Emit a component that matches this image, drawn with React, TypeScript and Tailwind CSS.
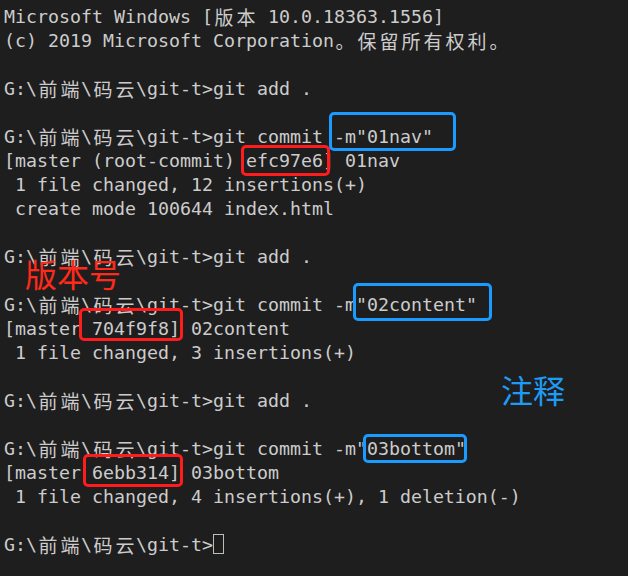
import React from "react";

const CJK = /[\u3000-\u303f\u4e00-\u9fff\uff00-\uffef]/;

function Line({ text, children }: { text: string; children?: React.ReactNode }) {
  const parts: React.ReactNode[] = [];
  let buf = "";
  let key = 0;
  for (const ch of text) {
    if (CJK.test(ch)) {
      if (buf) {
        parts.push(<span key={key++}>{buf}</span>);
        buf = "";
      }
      parts.push(
        <span
          key={key++}
          className="inline-block w-[22px] text-center align-top text-[19px] leading-[24px]"
          style={{ fontFamily: '"Noto Sans CJK SC", "Noto Sans", sans-serif' }}
        >
          {ch}
        </span>
      );
    } else {
      buf += ch;
    }
  }
  if (buf) parts.push(<span key={key++}>{buf}</span>);
  return (
    <div className="h-[24px] leading-[24px] whitespace-pre">
      {parts}
      {children}
    </div>
  );
}

const lines = [
  "Microsoft Windows [版本 10.0.18363.1556]",
  "(c) 2019 Microsoft Corporation。保留所有权利。",
  "",
  "G:\\前端\\码云\\git-t>git add .",
  "",
  'G:\\前端\\码云\\git-t>git commit -m"01nav"',
  "[master (root-commit) efc97e6] 01nav",
  " 1 file changed, 12 insertions(+)",
  " create mode 100644 index.html",
  "",
  "G:\\前端\\码云\\git-t>git add .",
  "",
  'G:\\前端\\码云\\git-t>git commit -m"02content"',
  "[master 704f9f8] 02content",
  " 1 file changed, 3 insertions(+)",
  "",
  "G:\\前端\\码云\\git-t>git add .",
  "",
  'G:\\前端\\码云\\git-t>git commit -m"03bottom"',
  "[master 6ebb314] 03bottom",
  " 1 file changed, 4 insertions(+), 1 deletion(-)",
  "",
];

function Box({ cls }: { cls: string }) {
  return <div className={cls} />;
}

export default function App() {
  return (
    <div className="relative w-[628px] h-[576px] overflow-hidden bg-[#1e1e1e]">
      <div
        className="flex flex-col pt-[5px] pl-[4px] text-[#cccccc] text-[18.27px]"
        style={{ fontFamily: '"DejaVu Sans Mono", "Liberation Mono", monospace' }}
      >
        {lines.map((l, i) => (
          <Line key={i} text={l} />
        ))}
        <Line text="G:\前端\码云\git-t>">
          <span className="inline-block align-top mt-[1px] w-[11px] h-[20px] border-[1.5px] border-[#bdbdbd]" />
        </Line>
      </div>

      {/* annotation overlays */}
      <Box cls="absolute left-[241px] top-[145px] w-[89px] h-[31px] border-[3px] border-[#ff1c1c] rounded-[5px]" />
      <Box cls="absolute left-[79px] top-[308px] w-[104px] h-[33px] border-[3px] border-[#ff1c1c] rounded-[5px]" />
      <Box cls="absolute left-[83px] top-[454px] w-[100px] h-[33px] border-[3px] border-[#ff1c1c] rounded-[5px]" />
      <Box cls="absolute left-[329px] top-[112px] w-[127px] h-[39px] border-[3px] border-[#1a9bff] rounded-[5px]" />
      <Box cls="absolute left-[353px] top-[283px] w-[139px] h-[38px] border-[3px] border-[#1a9bff] rounded-[5px]" />
      <Box cls="absolute left-[363px] top-[434px] w-[104px] h-[29px] border-[3px] border-[#1a9bff] rounded-[5px]" />

      <div
        className="absolute left-[25px] top-[253px] text-[32px] leading-[40px] text-[#ff2a1a]"
        style={{ fontFamily: '"Noto Sans CJK SC", sans-serif' }}
      >
        版本号
      </div>
      <div
        className="absolute left-[501px] top-[369px] text-[32px] leading-[40px] text-[#1e9bf5]"
        style={{ fontFamily: '"Noto Sans CJK SC", sans-serif' }}
      >
        注释
      </div>
    </div>
  );
}
